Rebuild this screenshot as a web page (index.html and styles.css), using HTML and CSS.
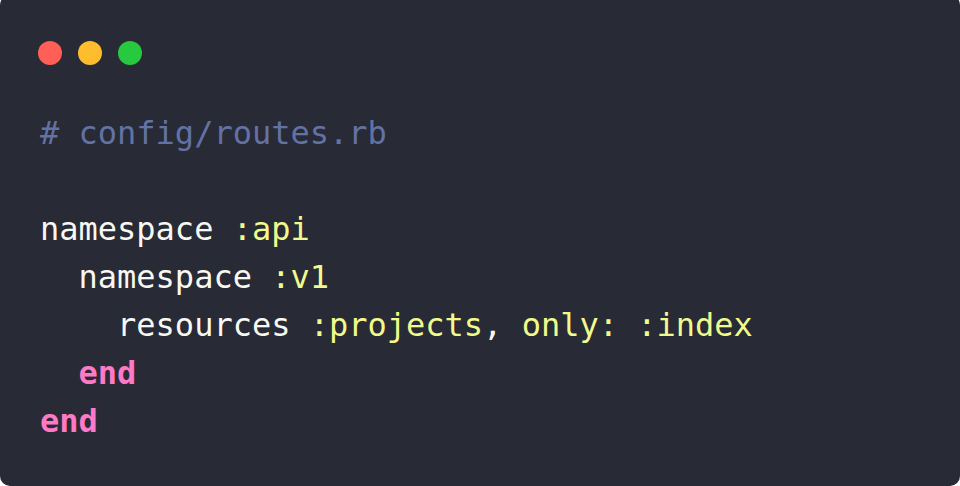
FILE: index.html
```html
<!DOCTYPE html>
<html>
<head>
<meta charset="utf-8">
<link rel="stylesheet" href="styles.css">
</head>
<body>
<div class="card">
  <div class="dots">
    <span class="dot red"></span>
    <span class="dot yellow"></span>
    <span class="dot green"></span>
  </div>
<pre class="code"><span class="c"># config/routes.rb</span>

namespace <span class="s">:api</span>
  namespace <span class="s">:v1</span>
    resources <span class="s">:projects</span>, <span class="s">only:</span> <span class="s">:index</span>
  <span class="k">end</span>
<span class="k">end</span></pre>
</div>
</body>
</html>
```
FILE: styles.css
```css
html, body {
  margin: 0;
  padding: 0;
  background: #ffffff;
  overflow: hidden;
}
.card {
  box-sizing: border-box;
  width: 960px;
  height: 491px;
  margin-top: -5px;
  background: #282a36;
  border-radius: 10px;
  padding: 46px 40px 0 38px;
}
.dots {
  display: flex;
  gap: 16px;
  height: 24px;
}
.dot {
  width: 24px;
  height: 24px;
  border-radius: 50%;
  display: block;
}
.red { background: #ff5f56; }
.yellow { background: #ffbd2e; }
.green { background: #27c93f; }
.code {
  margin: 44px 0 0 2px;
  font-family: "DejaVu Sans Mono", monospace;
  font-size: 32px;
  line-height: 48px;
  color: #f8f8f2;
}
.c { color: #6272a4; }
.s { color: #f1fa8c; }
.k { color: #ff79c6; font-weight: bold; }
```
